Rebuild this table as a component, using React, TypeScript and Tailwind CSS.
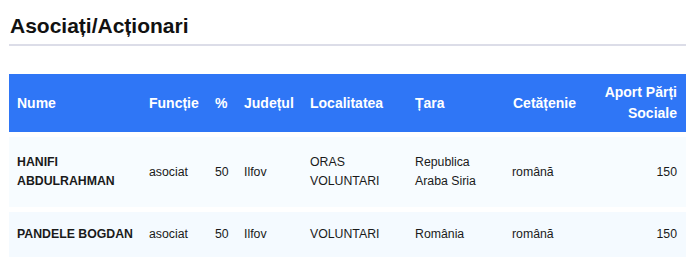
const rows = [
  {
    nume: "HANIFI ABDULRAHMAN",
    functie: "asociat",
    procent: "50",
    judet: "Ilfov",
    localitate: "ORAS VOLUNTARI",
    tara: "Republica Araba Siria",
    cetatenie: "română",
    aport: "150",
    h: "h-[70px] bg-[#f7fcff]",
  },
  {
    nume: "PANDELE BOGDAN",
    functie: "asociat",
    procent: "50",
    judet: "Ilfov",
    localitate: "VOLUNTARI",
    tara: "România",
    cetatenie: "română",
    aport: "150",
    h: "h-[45px] bg-[#f4faff]",
  },
];

export default function App() {
  return (
    <div className="min-h-screen bg-white font-['Liberation_Sans',Arial,sans-serif] text-[#1a1a1a]">
      <div className="ml-[9px] w-[677px] pt-[13px]">
        <h2 className="border-b-2 border-[#dcdde8] pb-[6px] pl-[1px] text-[21px] font-bold leading-[25px] text-[#111]">
          Asociați/Acționari
        </h2>

        <table className="mt-[23px] w-full table-fixed border-separate border-spacing-x-0 border-spacing-y-[5px]">
          <colgroup>
            <col className="w-[132px]" />
            <col className="w-[66px]" />
            <col className="w-[29px]" />
            <col className="w-[66px]" />
            <col className="w-[105px]" />
            <col className="w-[98px]" />
            <col className="w-[89px]" />
            <col />
          </colgroup>
          <thead>
            <tr className="h-[58px] bg-[#2f76f6] text-[14px] font-bold leading-[21px] text-white">
              <th className="pl-[8px] text-left align-middle">Nume</th>
              <th className="pl-[8px] text-left align-middle">Funcție</th>
              <th className="pl-[8px] text-left align-middle">%</th>
              <th className="pl-[8px] text-left align-middle">Județul</th>
              <th className="pl-[8px] text-left align-middle">Localitatea</th>
              <th className="pl-[8px] text-left align-middle">Țara</th>
              <th className="pl-[8px] text-left align-middle">Cetățenie</th>
              <th className="py-[8px] pr-[9px] text-right align-middle">
                Aport Părți Sociale
              </th>
            </tr>
          </thead>
          <tbody>
            {rows.map((r, i) => (
              <tr key={i} className={`${r.h} text-[12.3px] leading-[19px]`}>
                <td className="pl-[8px] pr-2 align-middle font-bold">{r.nume}</td>
                <td className="pl-[8px] align-middle">{r.functie}</td>
                <td className="pl-[8px] align-middle">{r.procent}</td>
                <td className="pl-[8px] align-middle">{r.judet}</td>
                <td className="pl-[8px] pr-2 align-middle">{r.localitate}</td>
                <td className="pl-[8px] pr-2 align-middle">{r.tara}</td>
                <td className="pl-[7px] align-middle">{r.cetatenie}</td>
                <td className="pr-[9px] text-right align-middle">{r.aport}</td>
              </tr>
            ))}
          </tbody>
        </table>
      </div>
    </div>
  );
}
